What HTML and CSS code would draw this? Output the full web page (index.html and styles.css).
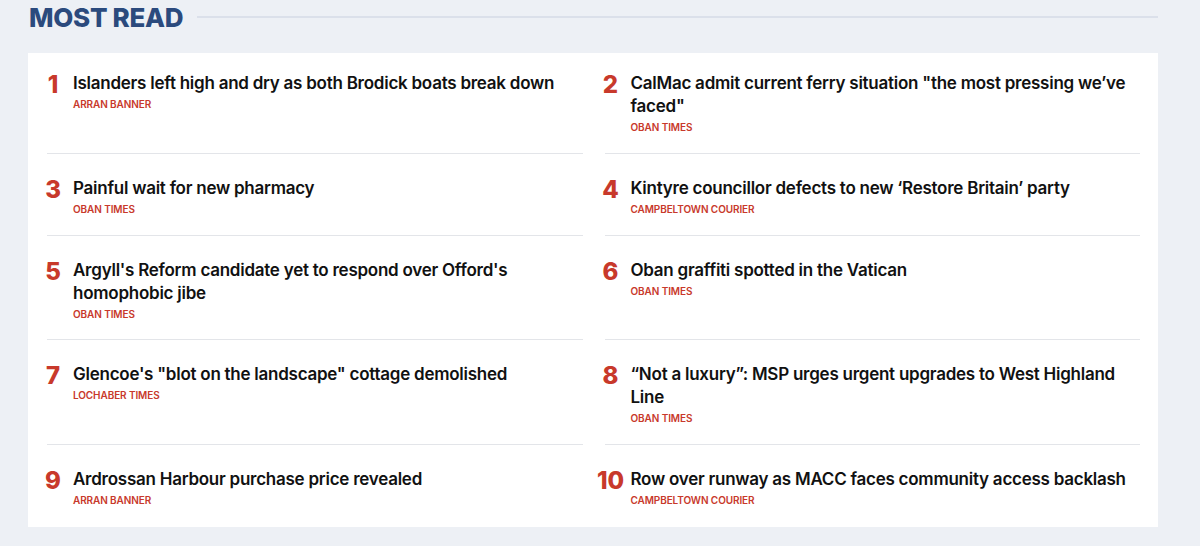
FILE: index.html
```html
<!DOCTYPE html>
<html lang="en">
<head>
<meta charset="utf-8">
<title>Most Read</title>
<link rel="stylesheet" href="styles.css">
</head>
<body>
<section class="most-read">
  <header class="mr-head">
    <h2 class="mr-title">MOST READ</h2>
    <span class="mr-rule"></span>
  </header>
  <ol class="mr-card">
    <li class="mr-item mr-first"><span class="mr-num">1</span><div class="mr-body"><a class="mr-link">Islanders left high and dry as both Brodick boats break down</a><span class="mr-src">ARRAN BANNER</span></div></li>
    <li class="mr-item mr-first"><span class="mr-num">2</span><div class="mr-body"><a class="mr-link">CalMac admit current ferry situation "the most pressing we’ve faced"</a><span class="mr-src">OBAN TIMES</span></div></li>
    <li class="mr-item"><span class="mr-num">3</span><div class="mr-body"><a class="mr-link">Painful wait for new pharmacy</a><span class="mr-src">OBAN TIMES</span></div></li>
    <li class="mr-item"><span class="mr-num">4</span><div class="mr-body"><a class="mr-link">Kintyre councillor defects to new ‘Restore Britain’ party</a><span class="mr-src">CAMPBELTOWN COURIER</span></div></li>
    <li class="mr-item"><span class="mr-num">5</span><div class="mr-body"><a class="mr-link">Argyll's Reform candidate yet to respond over Offord's homophobic jibe</a><span class="mr-src">OBAN TIMES</span></div></li>
    <li class="mr-item"><span class="mr-num">6</span><div class="mr-body"><a class="mr-link">Oban graffiti spotted in the Vatican</a><span class="mr-src">OBAN TIMES</span></div></li>
    <li class="mr-item"><span class="mr-num">7</span><div class="mr-body"><a class="mr-link">Glencoe's "blot on the landscape" cottage demolished</a><span class="mr-src">LOCHABER TIMES</span></div></li>
    <li class="mr-item"><span class="mr-num">8</span><div class="mr-body"><a class="mr-link">“Not a luxury”: MSP urges urgent upgrades to West Highland Line</a><span class="mr-src">OBAN TIMES</span></div></li>
    <li class="mr-item mr-last"><span class="mr-num">9</span><div class="mr-body"><a class="mr-link">Ardrossan Harbour purchase price revealed</a><span class="mr-src">ARRAN BANNER</span></div></li>
    <li class="mr-item mr-last"><span class="mr-num">10</span><div class="mr-body"><a class="mr-link">Row over runway as MACC faces community access backlash</a><span class="mr-src">CAMPBELTOWN COURIER</span></div></li>
  </ol>
</section>
</body>
</html>
```
FILE: styles.css
```css
* { box-sizing: border-box; }
html, body { margin: 0; padding: 0; }
body {
  background: #edf0f5;
  font-family: Inter, "Liberation Sans", Arial, sans-serif;
  color: #111;
}
.most-read {
  padding: 0 42px 0 28px;
}
.mr-head {
  display: flex;
  align-items: center;
  gap: 14px;
  height: 36px;
  padding-left: 1px;
}
.mr-title {
  margin: 0;
  font-size: 26px;
  font-weight: 800;
  color: #2b4a7d;
  letter-spacing: -0.3px;
  line-height: 36px;
}
.mr-rule {
  flex: 1;
  height: 2px;
  background: #dbe0ea;
  margin-top: -2px;
}
.mr-card {
  list-style: none;
  margin: 17px 0 0;
  background: #fff;
  padding: 0 18px 0 19px;
  display: grid;
  grid-template-columns: 1fr 1fr;
  column-gap: 22px;
}
.mr-item {
  display: flex;
  align-items: flex-start;
  gap: 14px;
  padding: 23px 0 18.5px;
  border-bottom: 1px solid #e3e5e9;
}
.mr-first { padding-top: 19px; padding-bottom: 19px; }
.mr-last { border-bottom: none; padding-bottom: 20px; }
.mr-num {
  width: 12px;
  flex: none;
  display: flex;
  justify-content: center;
  font-size: 24px;
  font-weight: 800;
  color: #c8392b;
  line-height: 26px;
  white-space: nowrap;
}
.mr-body {
  display: flex;
  flex-direction: column;
  gap: 2px;
}
.mr-link {
  font-size: 17px;
  font-weight: 600;
  line-height: 23px;
  color: #111;
  letter-spacing: -0.25px;
}
.mr-src {
  font-size: 10px;
  font-weight: 600;
  line-height: 14px;
  color: #c8392b;
  letter-spacing: -0.1px;
}
```
